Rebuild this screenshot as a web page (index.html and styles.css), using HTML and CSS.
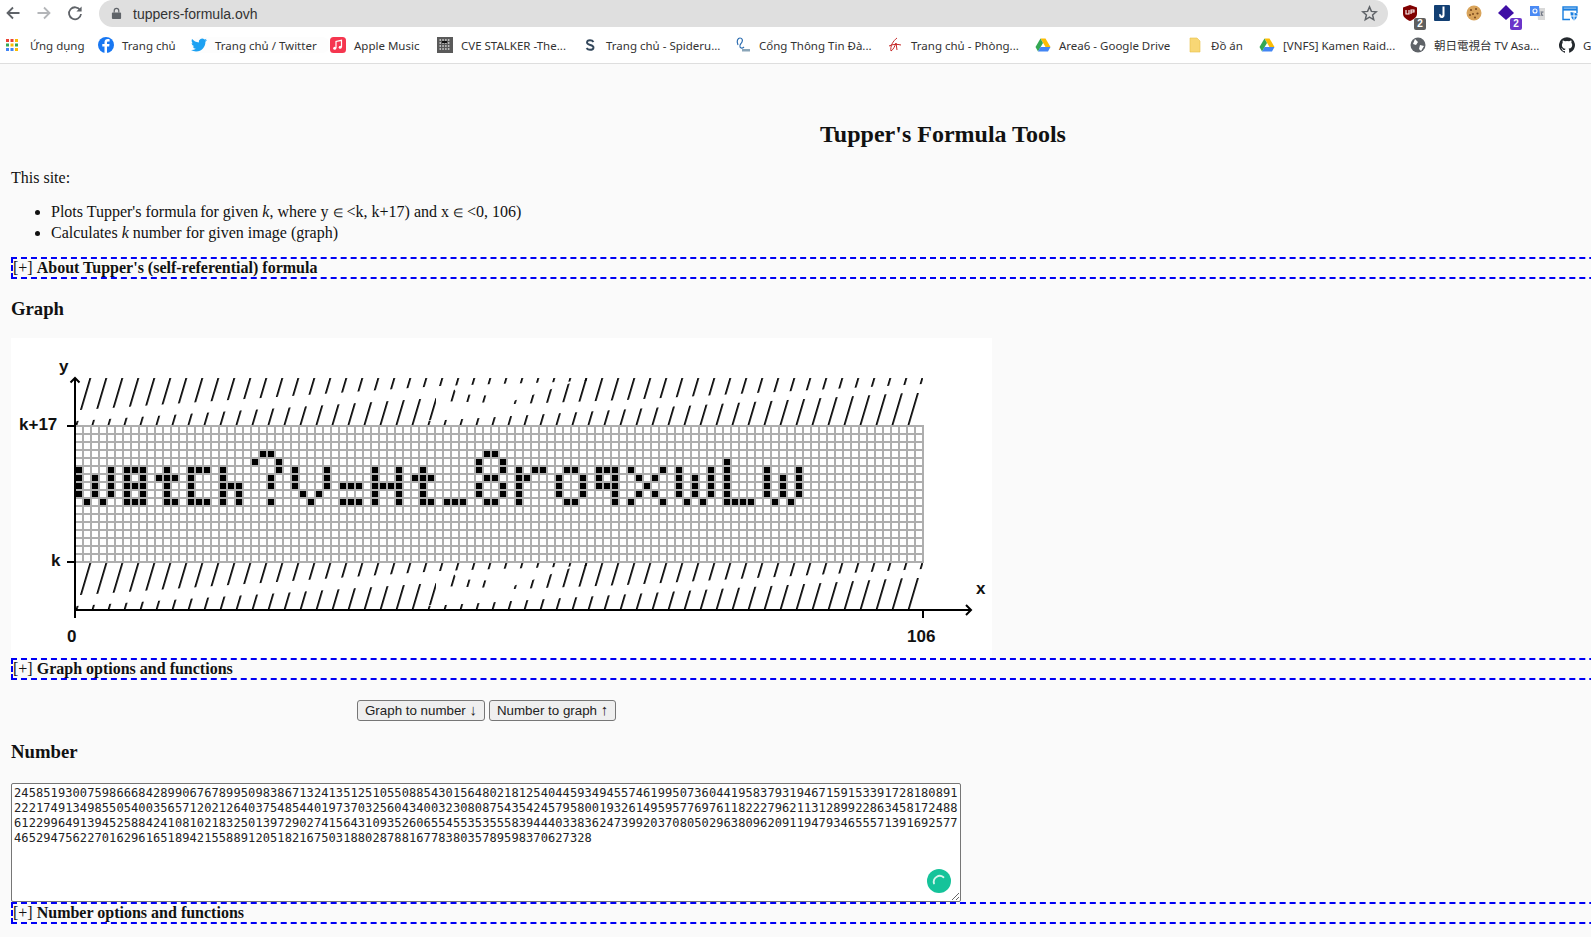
FILE: index.html
```html
<!DOCTYPE html>
<html lang="en">
<head>
  <meta charset="UTF-8">
  <title>Tupper's Formula Tools</title>
  <link rel="stylesheet" href="styles.css">
</head>
<body>
  <!-- Browser toolbar -->
  <div class="toolbar">
    <svg class="nav-icon" viewBox="0 0 16 16"><path d="M14.5 8H2.5M8 2.5 2.5 8 8 13.5" fill="none" stroke="#5f6368" stroke-width="1.8"/></svg>
    <svg class="nav-icon" viewBox="0 0 16 16"><path d="M1.5 8h12M8 2.5 13.5 8 8 13.5" fill="none" stroke="#b4b6b9" stroke-width="1.8"/></svg>
    <svg class="nav-icon" viewBox="0 0 16 16"><path d="M13.2 5.2A6 6 0 1 0 14 9" fill="none" stroke="#5f6368" stroke-width="1.8"/><path d="M14.6 1.4v5.2H9.4z" fill="#5f6368"/></svg>
    <div class="omnibox">
      <svg class="lock" viewBox="0 0 12 14"><path d="M2 6h8a1 1 0 0 1 1 1v5a1 1 0 0 1-1 1H2a1 1 0 0 1-1-1V7a1 1 0 0 1 1-1z" fill="#5f6368"/><path d="M3.5 6V4a2.5 2.5 0 0 1 5 0v2" fill="none" stroke="#5f6368" stroke-width="1.3"/></svg>
      <span class="url">tuppers-formula.ovh</span>
      <svg class="star" viewBox="0 0 16 16"><path d="M8 1.8 9.8 6l4.6.4-3.5 3 1.1 4.5L8 11.500 4 13.900l1.100-4.500-3.500-3L6.200 6z" fill="none" stroke="#5f6368" stroke-width="1.4"/></svg>
    </div>
    <div class="extensions">
      <div class="ext">
        <svg viewBox="0 0 16 16"><path d="M8 0 15 2.500V9c0 3-3.500 5.500-7 7-3.500-1.500-7-4-7-7V2.500z" fill="#800000"/><path d="M4 5v4h3V5M9 9V5h3v2H9" fill="none" stroke="#fff" stroke-width="1.100"/></svg>
        <span class="badge badge-grey">2</span>
      </div>
      <div class="ext">
        <svg viewBox="0 0 16 16"><rect width="16" height="16" rx="1" fill="#123f73"/><path d="M10.500 1.500v9c0 2.500-3.500 3.500-5 1.500l-.5-3 2 .5.500 1.500 1-1V1.500z" fill="#fff"/></svg>
      </div>
      <div class="ext">
        <svg viewBox="0 0 16 16"><circle cx="8" cy="8" r="7.500" fill="#d9a45b"/><g fill="#7b4a1e"><circle cx="5" cy="5" r="1.100"/><circle cx="10" cy="4" r="1"/><circle cx="11.500" cy="8.500" r="1.100"/><circle cx="7" cy="9" r="1"/><circle cx="4" cy="10" r=".9"/><circle cx="9" cy="12.500" r="1"/></g></svg>
      </div>
      <div class="ext">
        <svg viewBox="0 0 16 16"><path d="M8 0 16 8 8 15 0 8z" fill="#3f0ea5"/></svg>
        <span class="badge badge-purple">2</span>
      </div>
      <div class="ext">
        <svg viewBox="0 0 16 16"><path d="M7 3h8v12H8z" fill="#d9d9d9"/><path d="M0 1h9l1 10H0z" fill="#4a8af4"/><circle cx="5" cy="6" r="2" fill="none" stroke="#fff" stroke-width="1.100"/><path d="M10.500 7h3M12 7l-1 4M11 8l2 3" fill="none" stroke="#6b7280"/></svg>
      </div>
      <div class="ext">
        <svg viewBox="0 0 16 16"><path d="M8 14.500H1V2h14v6" fill="none" stroke="#1a7fe0" stroke-width="1.400"/><path d="M1 4.500h14" stroke="#1a7fe0" stroke-width="2.200"/><path d="M8.500 7 15.500 8.500c0 4-2 6-3.500 7-1.500-1-3.500-3-3.500-8.500z" fill="#1a7fe0"/><path d="M12 8v7M9 11h6" stroke="#fff"/></svg>
      </div>
    </div>
  </div>

  <!-- Bookmarks -->
  <div class="bookmarks">
    <div class="bm">
      <svg viewBox="0 0 12 12"><path d="M0 0h3v3H0z" fill="#ea4335"/><path d="M4.500 0h3v3h-3z" fill="#ea4335"/><path d="M9 0h3v3H9z" fill="#fbbc05"/><path d="M0 4.500h3v3H0z" fill="#34a853"/><path d="M4.500 4.500h3v3h-3z" fill="#fbbc05"/><path d="M9 4.500h3v3H9z" fill="#34a853"/><path d="M0 9h3v3H0z" fill="#4285f4"/><path d="M4.500 9h3v3h-3z" fill="#4285f4"/><path d="M9 9h3v3H9z" fill="#fbbc05"/></svg>
      <span>Ứng dụng</span>
    </div>
    <div class="bm">
      <svg viewBox="0 0 16 16"><circle cx="8" cy="8" r="8" fill="#1877f2"/><path d="M9 16V9.500h2.200l.3-2.500H9V5.600c0-.8.3-1.200 1.200-1.200h1.400V2.200C11 2.100 10.400 2 9.800 2 7.800 2 6.500 3.200 6.500 5.300V7H4.300v2.500h2.200V16z" fill="#fff"/></svg>
      <span>Trang chủ</span>
    </div>
    <div class="bm bm-hover">
      <svg viewBox="0 0 24 24"><path d="M23.950 4.570a10 10 0 0 1-2.820.77 4.960 4.960 0 0 0 2.160-2.720c-.95.55-2 .96-3.120 1.190a4.920 4.920 0 0 0-8.380 4.480C7.690 8.100 4.070 6.130 1.640 3.160a4.820 4.820 0 0 0-.67 2.480c0 1.710.87 3.200 2.190 4.100a4.900 4.900 0 0 1-2.230-.62v.06a4.920 4.920 0 0 0 3.950 4.830 5 5 0 0 1-2.210.08 4.940 4.940 0 0 0 4.600 3.420A9.870 9.870 0 0 1 0 19.540a14 14 0 0 0 7.560 2.210c9.050 0 14-7.500 14-13.980 0-.21 0-.42-.02-.63a9.940 9.940 0 0 0 2.460-2.550z" fill="#1da1f2"/></svg>
      <span>Trang chủ / Twitter</span>
    </div>
    <div class="bm">
      <svg viewBox="0 0 16 16"><rect width="16" height="16" rx="3.500" fill="#f5364f"/><path d="M6 11V4.500l5.500-1.200V10" fill="none" stroke="#fff" stroke-width="1.200"/><circle cx="4.700" cy="11.300" r="1.500" fill="#fff"/><circle cx="10.200" cy="10.300" r="1.500" fill="#fff"/></svg>
      <span>Apple Music</span>
    </div>
    <div class="bm">
      <svg viewBox="0 0 16 16"><rect width="16" height="16" fill="#5a5a5a"/><path d="M2.500 3h11M2.500 6h11M2.500 9h11M2.500 12h11" stroke="#ddd" stroke-width="1.500" stroke-dasharray="1.500 1.300"/><path d="M5 4h5v2H5z" fill="#111"/></svg>
      <span>CVE STALKER -The...</span>
    </div>
    <div class="bm">
      <svg viewBox="0 0 16 16"><path d="M11.500 5C10.800 3.800 9.500 3.200 8 3.200c-1.700 0-3 .9-3 2.400C5 8.600 11.500 7.400 11.500 10.400c0 1.500-1.300 2.400-3.500 2.400-1.300 0-2.600-.5-3.500-1.700" fill="none" stroke="#33475b" stroke-width="1.900"/></svg>
      <span>Trang chủ - Spideru...</span>
    </div>
    <div class="bm">
      <svg viewBox="0 0 16 16"><path d="M3 8C1 4 3 1 5 1s3 2 2 4-3 3-2 5 3 1 4 0" fill="none" stroke="#2b6cb0" stroke-width="1.200"/><path d="M7 12h8v2.500H7z" fill="#8aa5b8"/></svg>
      <span>Cổng Thông Tin Đà...</span>
    </div>
    <div class="bm">
      <svg viewBox="0 0 16 16"><path d="M10 1C6 4 3 9 4 14c2-1 4-5 5-8l1 7M2 9c4-2 8-2 12-1" fill="none" stroke="#c62828" stroke-width="1"/></svg>
      <span>Trang chủ - Phòng...</span>
    </div>
    <div class="bm">
      <svg viewBox="0 0 16 16"><path d="M5.500 1.500h5l5 8.500h-5z" fill="#fbbc05"/><path d="M5.500 1.500 .5 10 3 14.500 8 6z" fill="#34a853"/><path d="M3 14.500h10l2.500-4.500h-10z" fill="#4285f4"/></svg>
      <span>Area6 - Google Drive</span>
    </div>
    <div class="bm">
      <svg viewBox="0 0 16 16"><path d="M3 1h7l3 3v11H3z" fill="#f8d775" stroke="#e8c048" stroke-width=".6"/></svg>
      <span>Đồ án</span>
    </div>
    <div class="bm">
      <svg viewBox="0 0 16 16"><path d="M5.500 1.500h5l5 8.500h-5z" fill="#fbbc05"/><path d="M5.500 1.500 .5 10 3 14.500 8 6z" fill="#34a853"/><path d="M3 14.500h10l2.500-4.500h-10z" fill="#4285f4"/></svg>
      <span>[VNFS] Kamen Raid...</span>
    </div>
    <div class="bm">
      <svg viewBox="0 0 16 16"><circle cx="8" cy="8" r="7.500" fill="#5f6368"/><path d="M5 2 8 5 6 8 3 7zM10 8l4 1-3 5-2-2z" fill="#fff"/></svg>
      <span>朝日電視台 TV Asa...</span>
    </div>
    <div class="bm">
      <svg viewBox="0 0 24 24"><path d="M12 .3a12 12 0 0 0-3.800 23.400c.6.1.8-.3.8-.6v-2c-3.300.7-4-1.600-4-1.600-.5-1.400-1.300-1.800-1.300-1.800-1.100-.7.1-.7.1-.7 1.200.1 1.800 1.200 1.800 1.200 1 1.800 2.800 1.300 3.500 1 .1-.8.4-1.300.8-1.600-2.700-.3-5.500-1.300-5.500-6 0-1.200.5-2.300 1.300-3.100-.2-.4-.6-1.600 0-3.200 0 0 1-.3 3.400 1.200a11.500 11.500 0 0 1 6 0c2.300-1.500 3.300-1.200 3.300-1.200.7 1.600.3 2.800.1 3.200.8.8 1.300 1.900 1.300 3.100 0 4.600-2.800 5.600-5.500 5.900.5.4.9 1.100.9 2.200v3.300c0 .3.2.7.8.6A12 12 0 0 0 12 .3z" fill="#24292e"/></svg>
      <span>GitHub</span>
    </div>
  </div>

  <div class="page">
    <h1>Tupper's Formula Tools</h1>
    <p class="intro">This site:</p>
    <ul class="features">
      <li>Plots Tupper's formula for given <i>k</i>, where y <span class="elem">∈</span> &lt;k, k+17) and x <span class="elem">∈</span> &lt;0, 106)</li>
      <li>Calculates <i>k</i> number for given image (graph)</li>
    </ul>

    <div class="spoiler"><span class="toggle">[+]</span> <b>About Tupper's (self-referential) formula</b></div>

    <h3 class="section-graph">Graph</h3>
    <svg class="graph" viewBox="11 338 981 320">
      <defs>
        <pattern id="cells" x="74" y="425" width="8" height="8" patternUnits="userSpaceOnUse">
          <path d="M0 0h8v2H0zM0 0h2v8H0z" fill="#aeaeae"/>
        </pattern>
        <pattern id="hatch" x="89.400" y="378" width="16" height="47" patternUnits="userSpaceOnUse" patternTransform="skewX(-16.500)">
          <path d="M0 0h1.800v47H0z" fill="#000"/>
        </pattern>
        <!-- regions of the hatching that stay visible, the moire gaps are what is left out -->
        <g id="band" fill="url(#hatch)">
          <path d="M75 378H587V381L440 386 80 410z"/>
          <path d="M76 425V421L436 398V419L416 423V425z"/>
          <path d="M420 425 428 421 907 393H923V425z"/>
          <path d="M438 401 441 389 452 387 458 394 497 396V403z"/>
          <path d="M587 378H923V384L625 400 513 404V401z"/>
        </g>
      </defs>
      <rect x="11" y="338" width="981" height="320" fill="#fff"/>
      <use href="#band"/>
      <use href="#band" y="185"/>
      <rect x="74" y="425" width="850" height="138" fill="url(#cells)"/>
      <!-- message pixels, one path per grid row -->
      <g transform="translate(76 427)" stroke="#000" stroke-width="6">
        <path d="M184 27h6M192 27h6M408 27h6M416 27h6"/>
        <path d="M176 35h6M200 35h6M400 35h6M424 35h6M648 35h6"/>
        <path d="M0 43h6M32 43h6M48 43h6M56 43h6M64 43h6M88 43h6M112 43h6M120 43h6M128 43h6M144 43h6M200 43h6M216 43h6M248 43h6M296 43h6M320 43h6M344 43h6M400 43h6M424 43h6M440 43h6M456 43h6M464 43h6M488 43h6M496 43h6M520 43h6M528 43h6M536 43h6M552 43h6M584 43h6M600 43h6M632 43h6M648 43h6M688 43h6M720 43h6"/>
        <path d="M0 51h6M16 51h6M32 51h6M48 51h6M64 51h6M80 51h6M88 51h6M96 51h6M112 51h6M144 51h6M192 51h6M216 51h6M248 51h6M296 51h6M320 51h6M336 51h6M344 51h6M352 51h6M408 51h6M416 51h6M440 51h6M448 51h6M480 51h6M504 51h6M520 51h6M536 51h6M560 51h6M576 51h6M600 51h6M616 51h6M632 51h6M648 51h6M688 51h6M704 51h6M720 51h6"/>
        <path d="M0 59h6M16 59h6M32 59h6M48 59h6M56 59h6M64 59h6M88 59h6M112 59h6M144 59h6M152 59h6M160 59h6M192 59h6M216 59h6M248 59h6M264 59h6M272 59h6M280 59h6M296 59h6M304 59h6M312 59h6M320 59h6M344 59h6M400 59h6M424 59h6M440 59h6M480 59h6M504 59h6M520 59h6M528 59h6M536 59h6M568 59h6M600 59h6M616 59h6M632 59h6M648 59h6M688 59h6M704 59h6M720 59h6"/>
        <path d="M0 67h6M16 67h6M32 67h6M48 67h6M64 67h6M88 67h6M112 67h6M144 67h6M160 67h6M224 67h6M240 67h6M296 67h6M320 67h6M344 67h6M400 67h6M424 67h6M440 67h6M480 67h6M504 67h6M536 67h6M560 67h6M576 67h6M600 67h6M616 67h6M632 67h6M648 67h6M688 67h6M704 67h6M720 67h6"/>
        <path d="M8 75h6M24 75h6M48 75h6M56 75h6M64 75h6M88 75h6M96 75h6M112 75h6M120 75h6M128 75h6M144 75h6M160 75h6M192 75h6M232 75h6M264 75h6M272 75h6M280 75h6M296 75h6M320 75h6M344 75h6M352 75h6M368 75h6M376 75h6M384 75h6M408 75h6M416 75h6M440 75h6M488 75h6M496 75h6M536 75h6M552 75h6M584 75h6M608 75h6M624 75h6M648 75h6M656 75h6M664 75h6M672 75h6M696 75h6M712 75h6"/>
      </g>
      <!-- axes -->
      <g fill="none" stroke="#000" stroke-width="2">
        <path d="M75 379V618M75 610H971"/>
        <path d="M70.500 382.500 75 378 79.500 382.500M966 605 971 610 966 615"/>
        <path d="M67 426H75M67 562H75M923 610V618"/>
      </g>
      <g class="graph-label">
        <text x="59" y="372">y</text>
        <text x="19" y="430">k+17</text>
        <text x="51" y="566">k</text>
        <text x="976" y="594">x</text>
        <text x="67" y="642">0</text>
        <text x="907" y="642">106</text>
      </g>
    </svg>

    <div class="spoiler"><span class="toggle">[+]</span> <b>Graph options and functions</b></div>

    <div class="actions">
      <button>Graph to number <span class="arrow">↓</span></button>
      <button>Number to graph <span class="arrow">↑</span></button>
    </div>

    <h3 class="section-number">Number</h3>
    <div class="number-box">
      <textarea class="number" spellcheck="false">245851930075986668428990676789950983867132413512510550885430156480218125404459349455746199507360441958379319467159153391728180891
222174913498550540035657120212640375485440197370325604340032308087543542457958001932614959577697611822279621131289922863458172488
612299649139452588424108102183250139729027415643109352606554553535558394440338362473992037080502963809620911947934655571391692577
4652947562270162961651894215588912051821675031880287881677838035789598370627328</textarea>
      <svg class="grammarly" viewBox="0 0 24 24"><circle cx="12" cy="12" r="12" fill="#15c39a"/><path d="M16.500 8.200A6 6 0 0 0 7 14.500" fill="none" stroke="#d6f5ec" stroke-width="1.800" stroke-linecap="round"/></svg>
    </div>

    <div class="spoiler"><span class="toggle">[+]</span> <b>Number options and functions</b></div>
  </div>
</body>
</html>
```

FILE: styles.css
```css
html, body {
  margin: 0;
  padding: 0;
  height: 937px;
  overflow: hidden;
}
body {
  font-family: "Liberation Serif", serif;
  font-size: 16px;
  background-color: #fafafa;
  color: #111;
}

/* browser chrome */
.toolbar {
  height: 32px;
  background: #fff;
  display: flex;
  align-items: flex-start;
  font-family: "Noto Sans", sans-serif;
}
.nav-icon {
  width: 16px;
  height: 16px;
  margin: 5px 10px 0 5px;
  flex: none;
}
.omnibox {
  width: 1289px;
  height: 27px;
  margin-left: 6px;
  background: #dfdfdf;
  border-radius: 14px;
  display: flex;
  align-items: center;
  padding: 0 10px 0 12px;
  box-sizing: border-box;
  flex: none;
}
.lock {
  width: 11px;
  height: 13px;
}
.url {
  margin-left: 11px;
  font-family: "Liberation Sans", sans-serif;
  font-size: 14px;
  color: #333;
  flex: 1;
}
.star {
  width: 17px;
  height: 17px;
}
.extensions {
  display: flex;
  margin-left: 14px;
  gap: 16px;
}
.ext {
  position: relative;
  width: 16px;
  height: 16px;
  margin-top: 5px;
}
.ext svg {
  display: block;
  width: 16px;
  height: 16px;
}
.badge {
  position: absolute;
  right: -8px;
  bottom: -9px;
  width: 12px;
  height: 12px;
  border-radius: 2px;
  color: #fff;
  font: bold 10px/12px "Liberation Sans", sans-serif;
  text-align: center;
}
.badge-grey {
  background: #5f5f5f;
}
.badge-purple {
  background: #6b35c9;
}
.bookmarks {
  height: 26px;
  padding-bottom: 5px;
  background: #fff;
  border-bottom: 1px solid #dedede;
  display: grid;
  grid-template-columns: 92px 93px 139px 107px 145px 153px 152px 148px 152px 72px 151px 149px 60px;
  padding-left: 6px;
  align-items: center;
  font-family: "Noto Sans", "Noto Sans CJK TC", sans-serif;
  font-size: 11.5px;
  color: #333;
  white-space: nowrap;
  overflow: hidden;
}
.bm {
  display: flex;
  align-items: center;
  gap: 8px;
}
.bm svg {
  width: 16px;
  height: 16px;
  flex: none;
}
.bm:first-child svg {
  width: 12px;
  height: 12px;
  margin-right: 4px;
}
.bm-hover {
  background: #fdfdfd;
  border-radius: 14px;
}

/* page */
.page {
  width: 1864px;
  padding-left: 11px;
}
h1 {
  font-size: 24px;
  line-height: 27px;
  text-align: center;
  margin: 57px 0 21px;
}
h3 {
  font-size: 18.72px;
  line-height: 22px;
  margin: 19px 0 18px;
}
.intro {
  margin: 0 0 15px;
  line-height: 18px;
}
.features {
  margin: 0 0 14px;
  padding-left: 40px;
  line-height: 20px;
}
.elem {
  font-size: 12px;
}
.spoiler {
  border: 2px dashed #0000f5;
  height: 18px;
  line-height: 18px;
}
.toggle {
  font-weight: normal;
}
.graph {
  display: block;
  width: 981px;
  height: 320px;
}
.graph-label {
  font: bold 17px "Liberation Sans", sans-serif;
  fill: #111;
}
.actions {
  display: flex;
  gap: 4px;
  margin: 20px 0 0 346px;
}
button {
  font-family: "Liberation Sans", sans-serif;
  font-size: 13.33px;
  height: 21px;
  padding: 0 7px 0 7px;
  border: 1px solid #767676;
  border-radius: 3px;
  background: #efefef;
  color: #222;
}
.arrow {
  font-family: "Liberation Serif", serif;
  font-size: 15px;
  line-height: 13px;
}
.section-number {
  margin: 20px 0;
}
.number-box {
  position: relative;
  width: 950px;
}
.number {
  display: block;
  box-sizing: border-box;
  width: 950px;
  height: 119px;
  margin: 0;
  padding: 2px;
  border: 1px solid #767676;
  border-radius: 2px;
  background: #fff;
  color: #222;
  font-family: "DejaVu Sans Mono", monospace;
  font-size: 12px;
  letter-spacing: .09px;
  line-height: 15px;
  white-space: pre;
  overflow: hidden;
}
.grammarly {
  position: absolute;
  right: 10px;
  bottom: 9px;
  width: 24px;
  height: 24px;
}
```
